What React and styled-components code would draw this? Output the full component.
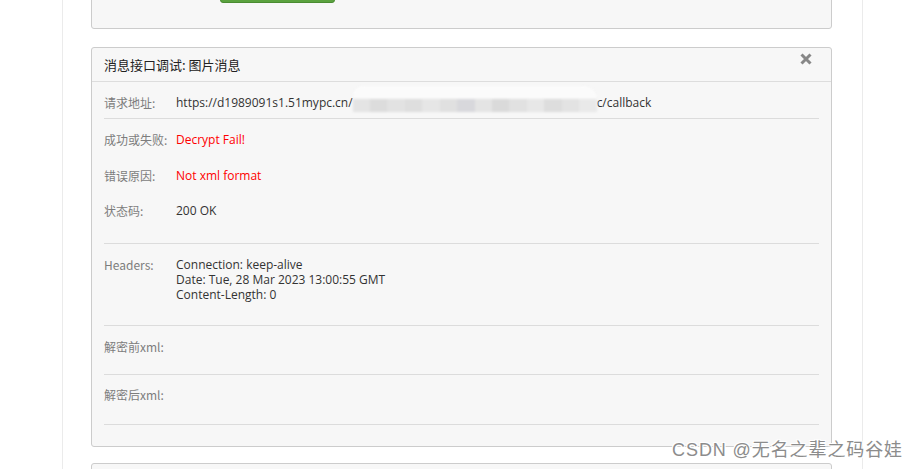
import styled, { createGlobalStyle } from "styled-components";

const GlobalStyle = createGlobalStyle`
	html, body {
		margin: 0;
		padding: 0;
		background: #fff;
		overflow: hidden;
	}
	body {
		font-family: "Open Sans", "Noto Sans CJK SC", sans-serif;
		font-size: 12px;
		color: #333;
	}
`;

const rows = [
	{ label: "成功或失败:", value: "Decrypt Fail!", error: true },
	{ label: "错误原因:", value: "Not xml format", error: true },
	{ label: "状态码:", value: "200 OK" },
];

const mosaic = ["#e4e4e4", "#dcdcdc", "#e2e2e2", "#dedede", "#e6e6e6", "#e0e0e0", "#d8d8dc", "#e4e4e4", "#dadada", "#e1e1e1", "#e7e7e7", "#dddddd", "#e3e3e3", "#e9e9e9"];

export default function App() {
	return (
		<Page>
			<GlobalStyle />
			<Container>
				<TopPanel>
					<GreenButton />
				</TopPanel>

				<Panel>
					<PanelHeader>
						<span>消息接口调试: 图片消息</span>
						<CloseIcon viewBox="0 0 12 12">
							<path d="M1.5 1.5 L10.5 10.5 M10.5 1.5 L1.5 10.5" />
						</CloseIcon>
					</PanelHeader>
					<PanelBody>
						<Section $pt={12} $pb={6}>
							<Row>
								<Label>请求地址:</Label>
								<Value>
									https://d1989091s1.51mypc.cn/
									<Redacted>
										{mosaic.map((c, i) => (
											<Block key={i} style={{ background: c }} />
										))}
									</Redacted>
									c/callback
								</Value>
							</Row>
						</Section>
						<Section $pt={12} $pb={23} $gap={17.5}>
							{rows.map((r) => (
								<Row key={r.label}>
									<Label>{r.label}</Label>
									<Value $error={r.error}>{r.value}</Value>
								</Row>
							))}
						</Section>
						<Section $pt={13} $pb={23}>
							<Row $tight>
								<Label>Headers:</Label>
								<Value $tight>
									Connection: keep-alive
									<br />
									Date: Tue, 28 Mar 2023 13:00:55 GMT
									<br />
									Content-Length: 0
								</Value>
							</Row>
						</Section>
						<Section $pt={12} $pb={18}>
							<Row>
								<Label>解密前xml:</Label>
							</Row>
						</Section>
						<Section $pt={11} $pb={20}>
							<Row>
								<Label>解密后xml:</Label>
							</Row>
						</Section>
					</PanelBody>
				</Panel>

				<Panel />
			</Container>
			<Watermark>CSDN @无名之辈之码谷娃</Watermark>
		</Page>
	);
}

const Page = styled.div`
	position: relative;
	width: 919px;
	height: 469px;
	overflow: hidden;
	padding-left: 62px;
	box-sizing: border-box;
`;

const Container = styled.div`
	display: flow-root;
	width: 801px;
	height: 469px;
	box-sizing: border-box;
	border-left: 1px solid #ebebeb;
	border-right: 1px solid #ebebeb;
	padding-left: 28px;
`;

const Panel = styled.div`
	width: 741px;
	box-sizing: border-box;
	background: #f7f7f7;
	border: 1px solid #cccccc;
	border-radius: 3px;
	margin-bottom: 16px;
	min-height: 40px;
`;

const TopPanel = styled(Panel)`
	margin-top: -30px;
	margin-bottom: 18px;
	padding: 12px 0 25px 128px;
`;

const GreenButton = styled.div`
	width: 115px;
	height: 20px;
	box-sizing: border-box;
	background: #5ba23f;
	border: 1px solid #4a8c32;
	border-radius: 3px;
`;

const PanelHeader = styled.div`
	display: flex;
	align-items: center;
	justify-content: space-between;
	height: 33px;
	padding: 0 19px 0 12px;
	border-bottom: 1px solid #dddddd;
	font-size: 13px;
	color: #222;
	font-family: "Noto Sans CJK SC", "Open Sans", sans-serif;

	span {
		padding-top: 0;
	}
`;

const CloseIcon = styled.svg`
	width: 12px;
	height: 12px;
	margin-top: -12px;
	stroke: #878787;
	stroke-width: 3;
	fill: none;
`;

const PanelBody = styled.div`
	padding: 0 12px 21px;
`;

const Section = styled.div`
	display: flex;
	flex-direction: column;
	gap: ${(p) => p.$gap || 17}px;
	padding: ${(p) => p.$pt}px 0 ${(p) => p.$pb}px;
	border-bottom: 1px solid #dcdcdc;
`;

const Row = styled.div`
	display: flex;
	align-items: flex-start;
	line-height: ${(p) => (p.$tight ? "15px" : "18px")};
	min-height: ${(p) => (p.$tight ? "15px" : "18px")};
`;

const Label = styled.div`
	width: 72px;
	flex-shrink: 0;
	color: #7d7d7d;
	font-family: "Noto Sans CJK SC", "Open Sans", sans-serif;
	font-size: 12px;
`;

const Value = styled.div`
	color: ${(p) => (p.$error ? "#ff0000" : "#333")};
	line-height: ${(p) => (p.$tight ? "15px" : "18px")};
	white-space: nowrap;
	display: ${(p) => (p.$tight ? "block" : "flex")};
	align-items: center;
`;

const Redacted = styled.span`
	display: inline-flex;
	align-items: flex-end;
	width: 244px;
	height: 26px;
	margin-top: -8px;
	filter: blur(1.2px);
	background: linear-gradient(#fbfbfb, #fbfbfb 45%, transparent 45%);
	border-radius: 10px 14px 0 0;
`;

const Block = styled.span`
	flex: 1;
	height: 13px;
`;

const Watermark = styled.div`
	position: absolute;
	right: 16px;
	bottom: 8px;
	font-family: "Liberation Sans", "Noto Sans CJK SC", sans-serif;
	font-size: 18px;
	letter-spacing: 0.9px;
	color: #8c8c8c;
	text-shadow: 0 0 1px #fff, 1px 1px 0 #fff, -1px -1px 0 #fff, 1px -1px 0 #fff, -1px 1px 0 #fff;
	white-space: nowrap;
`;
